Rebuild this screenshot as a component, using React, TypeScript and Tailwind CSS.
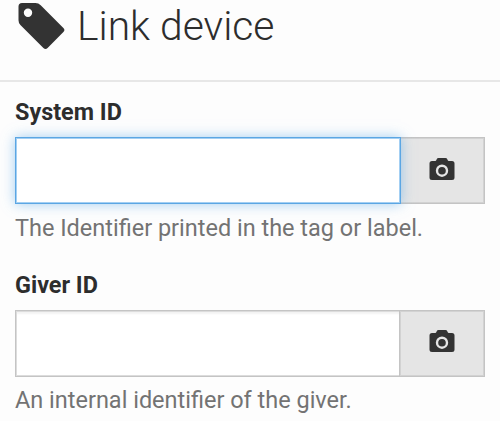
type FieldProps = { id: string; label: string; help: string; active?: boolean };

function TagIcon() {
  return (
    <svg className="mt-[3px] ml-[18px] h-[47px] w-[47px] shrink-0" viewBox="0 0 47 47" fill="#333333" aria-hidden="true">
      <path
        fillRule="evenodd"
        d="M4 0H17.5Q20.5 0 22.7 2.2L45.4 24.9Q47.4 27 45.4 29.1L29.6 44.9Q27.5 47 25.4 44.9L2.4 22Q.5 20 .5 17.2V3.5Q.5 0 4 0ZM10 5.6A4.2 4.2 0 1 0 10 14A4.2 4.2 0 1 0 10 5.6Z"
      />
    </svg>
  );
}

function CameraIcon() {
  return (
    <svg className="h-[22px] w-[26px]" viewBox="0 0 26 22" fill="#333333" aria-hidden="true">
      <path
        fillRule="evenodd"
        d="M3 3H6.2Q7 3 7.4 2L7.7 1.2Q8.2 0 9.5 0H16.5Q17.8 0 18.3 1.2L18.6 2Q19 3 19.8 3H23Q25.5 3 25.5 5.5V19.5Q25.5 22 23 22H3Q.5 22 .5 19.5V5.5Q.5 3 3 3ZM13 6.5A6.2 6.2 0 1 0 13 18.9A6.2 6.2 0 1 0 13 6.5ZM13 8.9A3.8 3.8 0 1 1 13 16.5A3.8 3.8 0 1 1 13 8.9Z"
      />
    </svg>
  );
}

function Field({ id, label, help, active }: FieldProps) {
  return (
    <div className={active ? "h-[173px]" : "h-[172px]"}>
      <label htmlFor={id} className="block h-[32px] text-[23.4px] leading-[32px] font-bold text-[#2d2d2d]">
        {label}
      </label>
      <div className="mt-[9px] flex h-[67px] w-[470px]">
        <input
          id={id}
          className={
            active
              ? "relative z-10 w-[386px] border border-[#5ba6e3] bg-white shadow-[0_0_12px_rgba(102,175,233,0.6),inset_0_0_0_1px_#a3cff3] outline-none"
              : "w-[386px] border border-[#c4c4c4] bg-white shadow-[inset_0_0_0_1px_#dcdcdc,inset_0_3px_2px_rgba(0,0,0,0.05)] outline-none"
          }
        />
        <button
          type="button"
          aria-label="Scan"
          className={`-ml-[2px] flex w-[86px] items-center justify-center border border-[#c4c4c4] bg-[#e5e5e5] shadow-[inset_0_0_0_1px_#d2d2d2] ${active ? "pb-[3px]" : "pb-[5px]"}`}
        >
          <CameraIcon />
        </button>
      </div>
      <p className={`${active ? "mt-[8px]" : "mt-[7px]"} h-[32px] text-[23.49px] leading-[32px] whitespace-nowrap text-[#737373]`}>
        {help}
      </p>
    </div>
  );
}

export default function App() {
  return (
    <main className="h-[421px] w-[500px] overflow-hidden bg-[#fdfdfd] font-[Roboto,sans-serif]">
      <header className="flex h-[82px] border-b-2 border-[#e7e7e7]">
        <TagIcon />
        <h1 className="mt-px ml-[12px] h-[50px] text-[40.8px] leading-[50px] font-light whitespace-nowrap text-[#2d2d2d]">
          Link device
        </h1>
      </header>
      <div className="pt-[14px] pl-[15px]">
        <Field id="system" label="System ID" help="The Identifier printed in the tag or label." active />
        <Field id="giver" label="Giver ID" help="An internal identifier of the giver." />
      </div>
    </main>
  );
}
